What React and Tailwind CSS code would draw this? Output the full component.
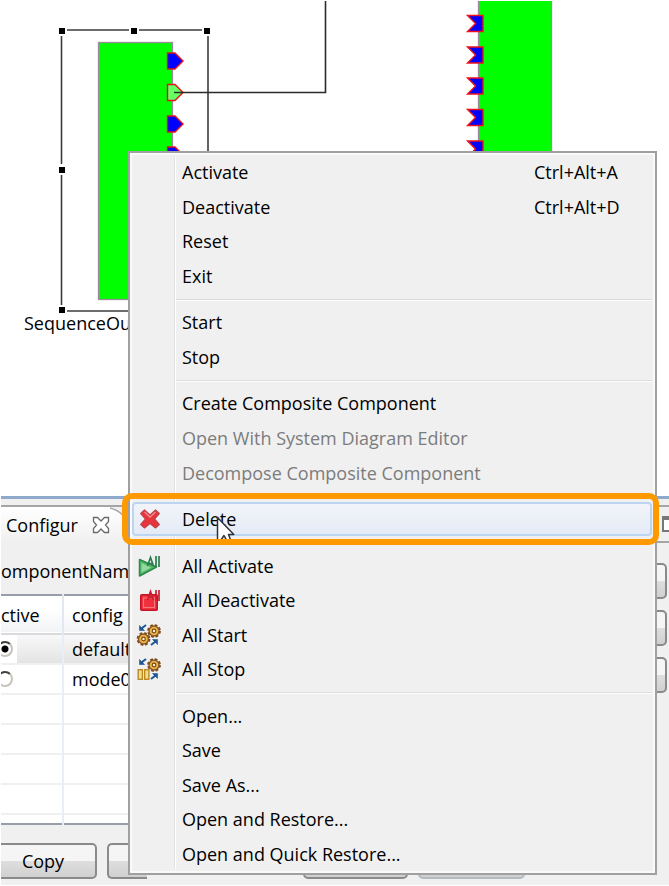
import React from "react";

function OutPort({ y, fill = "#0000ff" }) {
  return (
    <path
      d={`M167.5 ${y - 8}h7.5l8 8l-8 8h-7.5z`}
      fill={fill}
      stroke="#e8101c"
      strokeWidth="1.4"
    />
  );
}

function InPort({ y }) {
  return (
    <path
      d={`M467.5 ${y - 8}h15.5v16h-15.5l8-8z`}
      fill="#0000ff"
      stroke="#f01018"
      strokeWidth="1.4"
    />
  );
}

const handles = [
  [62, 31],
  [134, 31],
  [207, 31],
  [62, 170],
  [62, 310],
];

function Diagram() {
  return (
    <svg className="block h-full w-full" aria-hidden="true">
      <g stroke="#3c3c3c" strokeWidth="1.6" fill="none">
        <path d="M67 30H129M139 30H202M61.5 36V164M61.5 175V305M67 311H207M208 36V311" />
      </g>
      {handles.map(([x, y]) => (
        <rect key={`${x}-${y}`} x={x - 3} y={y - 3} width="6" height="6" fill="#000" />
      ))}
      <rect x="98.5" y="42.5" width="74" height="257" fill="#00ff00" stroke="#9a8a9a" strokeWidth="1.3" />
      <OutPort y={61} />
      <OutPort y={92.5} fill="#66ff66" />
      <OutPort y={124} />
      <OutPort y={155} />
      <path d="M174 92.5H325.5V1" fill="none" stroke="#2b2b2b" strokeWidth="1.6" />
      <rect x="478" y="1" width="74" height="260" fill="#00ff00" />
      <path d="M478.5 1V260M551.5 1V260" stroke="#9a8a9a" strokeWidth="1.3" />
      {[23.5, 55, 86, 117.5, 149].map((y) => (
        <InPort key={y} y={y} />
      ))}
    </svg>
  );
}

function DeleteIcon() {
  return (
    <svg width="20" height="20" viewBox="0 0 20 20" aria-hidden="true">
      <path
        d="M4.5 1L10 6L15.5 1L19.3 4.5L14.5 10L19.3 15.5L15.5 19L10 14.5L4.5 19L.7 15.5L5.5 10L.7 4.5Z"
        fill="#e8343c"
        stroke="#c0444a"
        strokeWidth="1.2"
        strokeLinejoin="round"
      />
      <path d="M4.5 3L10 8L15.5 3" fill="none" stroke="#f58a8c" strokeWidth="1.3" />
    </svg>
  );
}

function ActivateIcon() {
  return (
    <svg width="22" height="22" viewBox="0 0 22 22" aria-hidden="true">
      <path d="M1.5 4.5L18.5 12L1.5 21Z" fill="#55b869" stroke="#2a8a48" strokeWidth="1.5" strokeLinejoin="round" />
      <path d="M3.5 8L13 12.5L3.5 17.5Z" fill="#93d89c" />
      <path d="M9.5 11L12.5 2.500L15.5 11M10.5 8.500H15M18 1V12M21 1V12" fill="none" stroke="#2b7d4c" strokeWidth="1.7" />
    </svg>
  );
}

function DeactivateIcon() {
  return (
    <svg width="22" height="22" viewBox="0 0 22 22" aria-hidden="true">
      <rect x="2.8" y="5.8" width="16.4" height="15.4" rx="1" fill="#ef3340" stroke="#c41426" strokeWidth="1.6" />
      <rect x="5.5" y="9" width="11" height="9.5" fill="#f0303c" stroke="#f8777f" strokeWidth="1.1" />
      <path d="M9.5 11L12.5 2.500L15.5 11M10.5 8.500H15M18 1V12M21 1V12" fill="none" stroke="#c9202e" strokeWidth="1.7" />
    </svg>
  );
}

function Gear({ x, y }) {
  return (
    <g transform={`translate(${x} ${y})`}>
      <circle r="5.8" fill="none" stroke="#7b4a1c" strokeWidth="2.2" strokeDasharray="2.7 1.85" />
      <circle r="5" fill="#e9b54a" stroke="#8a5520" strokeWidth="1.4" />
      <circle r="1.8" fill="#fdf1d5" stroke="#7b4a1c" strokeWidth="1.2" />
    </g>
  );
}

function Arrows() {
  return (
    <g fill="#1d5794" stroke="#1d5794">
      <path d="M3.500 2.500V7.500H8.500Z" strokeWidth=".6" />
      <path d="M5.500 5.500L10 2" strokeWidth="2" />
      <path d="M21.500 21.500V16.500H16.500Z" strokeWidth=".6" />
      <path d="M19.500 18.500L15 22" strokeWidth="2" />
    </g>
  );
}

function StartIcon() {
  return (
    <svg width="26" height="24" viewBox="0 0 26 24" aria-hidden="true">
      <Arrows />
      <Gear x={18} y={8} />
      <Gear x={7.5} y={16} />
    </svg>
  );
}

function StopIcon() {
  return (
    <svg width="26" height="24" viewBox="0 0 26 24" aria-hidden="true">
      <Arrows />
      <Gear x={18} y={8} />
      <rect x="2.2" y="12.7" width="4.2" height="9.6" fill="#f5dd86" stroke="#b98a25" strokeWidth="1.4" />
      <rect x="8.7" y="12.7" width="4.2" height="9.6" fill="#f5dd86" stroke="#b98a25" strokeWidth="1.4" />
    </svg>
  );
}

function Cursor() {
  return (
    <svg className="absolute left-[84px] top-[14px] h-6 w-5" viewBox="0 0 20 24" aria-hidden="true">
      <path
        d="M1.5 1.5V24H5L8 19.5L11 25H15L12.5 18.5H17.8Z"
        fill="#fff"
        stroke="#2f333c"
        strokeWidth="1.5"
        strokeLinejoin="round"
      />
    </svg>
  );
}

function MenuItem({ icon, label, keys, disabled }) {
  return (
    <button
      type="button"
      role="menuitem"
      disabled={disabled}
      className="flex w-full flex-1 items-center whitespace-nowrap text-left text-black disabled:text-[#7c7c7c]"
    >
      <span className="flex w-[34px] shrink-0 items-center justify-center">{icon}</span>
      <span className="flex-1 pl-4">{label}</span>
      {keys && <span className="mr-7 w-[90px]">{keys}</span>}
    </button>
  );
}

function Separator() {
  return (
    <div role="separator" className="flex h-3 shrink-0 items-center pl-11 pt-[2px]">
      <div className="h-[2px] flex-1 border-t border-[#dcdcdc] bg-white" />
    </div>
  );
}

function DeleteItem() {
  return (
    <div className="relative flex flex-1">
      <button
        type="button"
        role="menuitem"
        className="flex w-full items-center rounded-[4px] border-2 border-[#bcd5f3] bg-linear-to-b from-[#f2f4f8] to-[#e4ebf6] text-left leading-5 text-black"
      >
        <span className="flex w-[32px] shrink-0 items-center justify-center">
          <DeleteIcon />
        </span>
        <span className="pl-4">Delete</span>
      </button>
      <Cursor />
      <div className="pointer-events-none absolute -bottom-[9px] -left-[10px] -right-[7px] -top-[9px] rounded-[10px] border-[6px] border-[#ff9900]" />
    </div>
  );
}

function ContextMenu() {
  return (
    <div
      role="menu"
      className="absolute left-32 right-3 top-[151px] flex min-h-[724px] flex-col border-2 border-[#a0a0a0] bg-[#f0f0f0] py-[2px] pl-[2px] pr-[3px] shadow-[inset_0_0_0_2px_#fafafa]"
    >
      <div className="absolute bottom-1 left-11 top-1 w-[2px] border-l border-[#e2e2e2] bg-white" />
      <MenuItem label="Activate" keys="Ctrl+Alt+A" />
      <MenuItem label="Deactivate" keys="Ctrl+Alt+D" />
      <MenuItem label="Reset" />
      <MenuItem label="Exit" />
      <Separator />
      <MenuItem label="Start" />
      <MenuItem label="Stop" />
      <Separator />
      <MenuItem label="Create Composite Component" />
      <MenuItem label="Open With System Diagram Editor" disabled />
      <MenuItem label="Decompose Composite Component" disabled />
      <Separator />
      <DeleteItem />
      <Separator />
      <MenuItem label="All Activate" icon={<ActivateIcon />} />
      <MenuItem label="All Deactivate" icon={<DeactivateIcon />} />
      <MenuItem label="All Start" icon={<StartIcon />} />
      <MenuItem label="All Stop" icon={<StopIcon />} />
      <Separator />
      <MenuItem label="Open..." />
      <MenuItem label="Save" />
      <MenuItem label="Save As..." />
      <MenuItem label="Open and Restore..." />
      <MenuItem label="Open and Quick Restore..." />
    </div>
  );
}

const buttonLook =
  "h-9 shrink-0 rounded-[5px] border-2 border-[#8a8a8a] bg-linear-to-b from-[#f5f5f5] from-50% via-[#dedede] via-50% to-[#d0d0d0]";

function ConfigRow({ name, checked }) {
  return (
    <tr className="h-[30px] border-b-2 border-[#f0f0f0]">
      <td className={checked ? "bg-linear-to-b from-[#f8f8f8] to-[#e4e4e4]" : ""}>
        <div className="flex h-7 w-4 items-center overflow-hidden bg-white">
          <input
            type="radio"
            name="active"
            aria-label={name}
            defaultChecked={checked}
            className="-ml-1 h-4 w-4 shrink-0 appearance-none rounded-full border-2 border-[#c8c4ba] border-t-[#404040] bg-white checked:bg-[radial-gradient(circle,#000_3px,#fff_4px)]"
          />
        </div>
      </td>
      <td
        className={
          checked
            ? "border-l-2 border-[#e8eef6] bg-linear-to-b from-[#f8f8f8] to-[#e4e4e4] pl-2"
            : "border-l-2 border-[#e8eef6] pl-2"
        }
      >
        {name}
      </td>
    </tr>
  );
}

function ConfigTable() {
  return (
    <table className="w-full table-fixed border-collapse border-y-2 border-[#989ea8] bg-white text-left leading-7">
      <colgroup>
        <col className="w-[62px]" />
        <col />
      </colgroup>
      <thead>
        <tr className="h-[39px] border-b-2 border-[#d8dadd] bg-linear-to-b from-white from-40% to-[#f1f3f6]">
          <th className="pt-px font-normal">ctive</th>
          <th className="border-l-2 border-[#e2e8f0] pl-2 pt-px font-normal">config</th>
        </tr>
      </thead>
      <tbody>
        <ConfigRow name="default" checked />
        <ConfigRow name="mode0" />
        {[0, 1, 2, 3].map((n) => (
          <tr key={n} className="h-[30px] border-b-2 border-[#f0f0f0]">
            <td />
            <td className="border-l-2 border-[#e8eef6]" />
          </tr>
        ))}
        <tr className="h-[10px]">
          <td />
          <td className="border-l-2 border-[#e8eef6]" />
        </tr>
      </tbody>
    </table>
  );
}

function ConfigPanel() {
  return (
    <section className="ml-px bg-[#f0f0f0] pb-[6px]">
      <div className="h-[3px] bg-[#8fa9cc]" />
      <div className="h-2 border-b-2 border-[#a5a5a5] bg-[#f0f0f0]" />
      <div className="flex h-9 items-center">
        <div className="flex h-full items-center bg-linear-to-b from-white to-[#f0f0f0] pl-[5px]">
          <span>Configur</span>
          <svg className="ml-[14px] h-[18px] w-[18px]" viewBox="0 0 18 18" aria-hidden="true">
            <path
              d="M1.5 1.5H5.5L9 5L12.5 1.5H16.5V5.500L13.500 9L16.5 12.500V16.5H12.5L9 13L5.5 16.5H1.5V12.500L4.500 9L1.5 5.500Z"
              fill="#fff"
              stroke="#6a6a6a"
              strokeWidth="1.3"
            />
          </svg>
          <svg className="h-full w-5" viewBox="0 0 20 36" aria-hidden="true">
            <path d="M-8 0C4 0 10 5 20 14V0Z" fill="#f0f0f0" />
            <path d="M-8 0C4 0 10 5 20 14" fill="none" stroke="#a5a5a5" strokeWidth="1.6" />
          </svg>
        </div>
        <div className="flex h-full flex-1 items-center justify-end overflow-hidden border-b-2 border-[#a5a5a5]">
          <button
            type="button"
            aria-label="Maximize"
            className="-mr-3 h-4 w-[19px] shrink-0 border-2 border-t-4 border-[#777] bg-white"
          />
        </div>
      </div>
      <div className="flex">
        <div className="min-w-0 flex-1">
          <div className="flex h-[51px] items-center pb-1 pt-2">
            <span>omponentNam</span>
          </div>
          <ConfigTable />
        </div>
        <div className="flex w-[92px] flex-col gap-[11px] pl-3 pr-[2px] pt-5">
          <button type="button" aria-label="Edit" className={buttonLook} />
          <button type="button" aria-label="Apply" className={buttonLook} />
          <button type="button" aria-label="Cancel" className={buttonLook} />
        </div>
      </div>
      <div className="flex gap-[10px] overflow-hidden pt-[18px]">
        <button type="button" className={`${buttonLook} -ml-3 w-[108px]`}>
          Copy
        </button>
        <button type="button" aria-label="Add" className={`${buttonLook} w-10 rounded-r-none border-r-0`} />
        <button type="button" aria-label="Delete set" className={`${buttonLook} ml-[146px] w-[105px]`} />
        <button type="button" aria-label="Detail" disabled className={`${buttonLook} w-[107px] disabled:border-[#b5babf]`} />
      </div>
    </section>
  );
}

export default function App() {
  return (
    <main className="relative overflow-hidden bg-white pb-[2px] font-['Open_Sans','Noto_Sans',sans-serif] text-[18px] leading-6 text-black">
      <div className="relative h-[496px]">
        <Diagram />
        <span className="absolute left-6 top-[311px]">SequenceOu</span>
      </div>
      <ConfigPanel />
      <ContextMenu />
    </main>
  );
}
